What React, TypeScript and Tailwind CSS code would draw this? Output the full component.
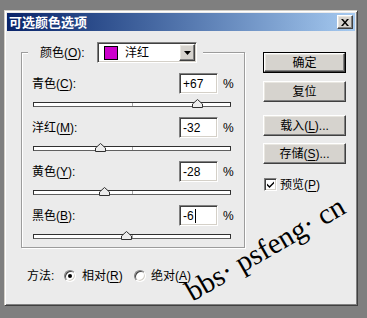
import React from "react";

const ui = "font-['Liberation_Sans','Noto_Sans_CJK_SC',sans-serif]";

const raised =
  "border border-t-white border-l-white border-r-[#404040] border-b-[#404040] shadow-[inset_-1px_-1px_0_#808080,inset_1px_1px_0_#e8e6e0]";
const sunken =
  "border border-t-[#808080] border-l-[#808080] border-r-white border-b-white shadow-[inset_1px_1px_0_#404040,inset_-1px_-1px_0_#d4d0c8]";

function K({ c }: { c: string }) {
  return <span className="underline decoration-1 underline-offset-[2px]">{c}</span>;
}

const rows = [
  { name: "青色", key: "C", value: 67, text: "+67" },
  { name: "洋红", key: "M", value: -32, text: "-32" },
  { name: "黄色", key: "Y", value: -28, text: "-28" },
  { name: "黑色", key: "B", value: -6, text: "-6", caret: true },
];

function Slider({ value }: { value: number }) {
  const left = Math.round(((value + 100) / 200) * 197);
  return (
    <div className="relative mt-[2px] ml-px h-[15px] w-[198px]">
      <div className="absolute top-[6px] left-0 h-[5px] w-full border border-[#303030] border-b-[#606060] bg-white">
        <div className="mx-auto h-full w-px bg-[#a8a8a8]" />
      </div>
      <svg className="absolute top-[3px]" style={{ left: left - 5 }} width="11" height="9" viewBox="0 0 11 9">
        <path d="M5.5 0.5 L10.5 5 V8.5 H0.5 V5 Z" fill="#ececec" stroke="#303030" />
      </svg>
    </div>
  );
}

function Button({ children, main }: { children: React.ReactNode; main?: boolean }) {
  const face = (
    <div className={`flex h-full w-full items-center justify-center bg-[#d6d3ce] ${raised}`}>{children}</div>
  );
  return (
    <div className={`h-[21px] w-[83px] ${main ? "border border-black" : ""}`}>{face}</div>
  );
}

function Radio({ on }: { on?: boolean }) {
  return (
    <span
      className={`flex h-[12px] w-[12px] items-center justify-center rounded-full bg-white ${sunken}`}
    >
      {on && <span className="h-[4px] w-[4px] rounded-full bg-black" />}
    </span>
  );
}

export default function App() {
  return (
    <div className={`h-[318px] w-[367px] overflow-hidden bg-[#7f7f7f] pt-[10px] pl-[4px] text-[12px] text-black ${ui}`}>
      <div className="relative h-[296px] w-[354px] border border-t-[#d4d0c8] border-l-[#d4d0c8] border-r-[#404040] border-b-[#404040] bg-[#ebebeb] p-[2px] shadow-[inset_1px_1px_0_#fff,inset_-1px_-1px_0_#808080]">
        <div className="flex h-[18px] items-center justify-between bg-gradient-to-r from-[#0a246a] to-[#a6caf0] pl-[2px] pr-[2px]">
          <span className="text-[13px] font-bold text-white font-['Noto_Sans_CJK_SC',sans-serif]">可选颜色选项</span>
          <span className={`flex h-[14px] w-[16px] items-center justify-center bg-[#d6d3ce] ${raised}`}>
            <svg width="8" height="7" viewBox="0 0 8 7">
              <path d="M0 0h2l2 2.5L6 0h2L5 3.5 8 7H6L4 4.5 2 7H0l3-3.5z" fill="#000" />
            </svg>
          </span>
        </div>

        <div className="pt-[11px] pl-[14px]">
          <div className="flex">
            <fieldset className="w-[224px] border border-[#9c9c9c] pt-[10px] pb-[4px] pl-[6px] shadow-[1px_1px_0_#fff,inset_1px_1px_0_#fff]">
              <legend className="flex h-[21px] items-center bg-[#ebebeb] pr-[6px] pl-[12px]">
                <span className="w-[57px]">
                  颜色(<K c="O" />):
                </span>
                <div className={`flex h-[21px] w-[100px] items-center bg-white pl-[6px] ${sunken}`}>
                  <span className="h-[14px] w-[14px] border border-black bg-[#cc00cc]" />
                  <span className="ml-[7px] flex-1">洋红</span>
                  <span className={`mr-px flex h-[17px] w-[16px] items-center justify-center bg-[#d6d3ce] ${raised}`}>
                    <svg width="7" height="4" viewBox="0 0 7 4">
                      <path d="M0 0h7L3.5 4z" fill="#000" />
                    </svg>
                  </span>
                </div>
              </legend>

              <div className="flex flex-col gap-[6px] pl-[4px]">
                {rows.map((r) => (
                  <div key={r.key} className="flex flex-col">
                    <div className="flex h-[21px] items-center">
                      <span className="w-[147px]">
                        {r.name}(<K c={r.key} />):
                      </span>
                      <div className={`flex h-[21px] w-[39px] items-center bg-white pl-[3px] ${sunken}`}>
                        {r.text}
                        {r.caret && <span className="ml-px h-[14px] w-px bg-black" />}
                      </div>
                      <span className="ml-[5px]">%</span>
                    </div>
                    <Slider value={r.value} />
                  </div>
                ))}
              </div>
            </fieldset>

            <div className="mt-[10px] ml-[18px] flex flex-col">
              <Button main>确定</Button>
              <div className="mt-[8px]">
                <Button>复位</Button>
              </div>
              <div className="mt-[13px]">
                <Button>
                  载入(<K c="L" />)...
                </Button>
              </div>
              <div className="mt-[7px]">
                <Button>
                  存储(<K c="S" />)...
                </Button>
              </div>
              <label className="mt-[14px] flex h-[13px] items-center pl-px">
                <span className={`flex h-[13px] w-[13px] items-center justify-center bg-white ${sunken}`}>
                  <svg width="9" height="9" viewBox="0 0 9 9">
                    <path d="M1 3.5l2.5 2.5L8 1.5v2L3.5 8 1 5.5z" fill="#000" />
                  </svg>
                </span>
                <span className="ml-[3px]">
                  预览(<K c="P" />)
                </span>
              </label>
            </div>
          </div>

          <div className="mt-[21px] ml-[6px] flex h-[14px] items-center">
            <span className="w-[37px]">方法:</span>
            <Radio on />
            <span className="ml-[6px] w-[52px]">
              相对(<K c="R" />)
            </span>
            <Radio />
            <span className="ml-[5px]">
              绝对(<K c="A" />)
            </span>
          </div>
        </div>

        <span className="pointer-events-none absolute left-[190px] top-[266px] origin-bottom-left -rotate-[30deg] whitespace-pre text-[29px] leading-none font-['Liberation_Serif',serif]">
          bbs· psfeng· cn
        </span>
      </div>
    </div>
  );
}
